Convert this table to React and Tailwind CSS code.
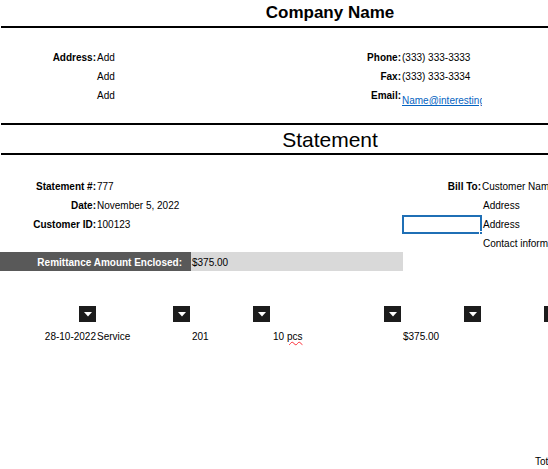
import React from "react"

const font = { fontFamily: '"Liberation Sans", Arial, sans-serif' }

const Dropdown = () => (
  <div className="w-[17px] h-[16px] bg-[#1c1c1c] flex items-center justify-center">
    <svg width="8" height="5" viewBox="0 0 8 5">
      <polygon points="0,0 8,0 4,4.5" fill="#fff" />
    </svg>
  </div>
)

const Rule = () => <div className="h-[2px] bg-black ml-[1px] w-[700px]" />

const App = () => {
  return (
    <div
      className="w-[548px] h-[469px] overflow-hidden bg-white text-black text-[10px] leading-[19px] relative"
      style={font}
    >
      <div className="w-[700px]">
        {/* Company header */}
        <div className="w-[660px] h-[26px] flex items-center justify-center text-[17px] font-bold leading-none pb-[2px]">
          Company Name
        </div>
        <Rule />

        {/* Contact block */}
        <div className="pt-[20px] flex flex-col">
          <div className="flex h-[19px]">
            <div className="w-[97px] text-right font-bold pr-[1px]">Address:</div>
            <div className="w-[94px]">Add</div>
            <div className="w-[211px] text-right font-bold pr-[1px]">Phone:</div>
            <div className="w-[80px] whitespace-nowrap">(333) 333-3333</div>
          </div>
          <div className="flex h-[19px]">
            <div className="w-[97px]" />
            <div className="w-[94px]">Add</div>
            <div className="w-[211px] text-right font-bold pr-[1px]">Fax:</div>
            <div className="w-[80px] whitespace-nowrap">(333) 333-3334</div>
          </div>
          <div className="flex h-[19px] items-start">
            <div className="w-[97px]" />
            <div className="w-[94px]">Add</div>
            <div className="w-[211px] text-right font-bold pr-[1px]">Email:</div>
            <div className="w-[80px] overflow-x-clip whitespace-nowrap pt-[9px] leading-[12px]">
              <a href="#" className="text-[#0563c1] underline">
                Name@interesting.com
              </a>
            </div>
          </div>
        </div>

        {/* Statement title */}
        <div className="mt-[18px]">
          <Rule />
          <div className="w-[660px] h-[28px] flex items-center justify-center text-[21px] leading-none">
            Statement
          </div>
          <Rule />
        </div>

        {/* Statement details */}
        <div className="pt-[22px] flex flex-col">
          <div className="flex h-[19px]">
            <div className="w-[97px] text-right font-bold pr-[1px]">Statement #:</div>
            <div className="w-[94px]">777</div>
            <div className="w-[291px] text-right font-bold pr-[1px]">Bill To:</div>
            <div className="w-[80px] whitespace-nowrap">Customer Name</div>
          </div>
          <div className="flex h-[19px]">
            <div className="w-[97px] text-right font-bold pr-[1px]">Date:</div>
            <div className="w-[94px] whitespace-nowrap">November 5, 2022</div>
            <div className="w-[291px]" />
            <div className="w-[80px] pl-[1px]">Address</div>
          </div>
          <div className="flex h-[19px]">
            <div className="w-[97px] text-right font-bold pr-[1px]">Customer ID:</div>
            <div className="w-[94px]">100123</div>
            <div className="w-[80px]" />
            <div className="w-[131px]" />
            <div className="w-[80px] h-[19px] border-2 border-[#1f6fb5] relative">
              <div className="absolute -right-[3px] -bottom-[3px] w-[4px] h-[4px] bg-[#1f6fb5] border border-white" />
            </div>
            <div className="w-[80px] pl-[1px]">Address</div>
          </div>
          <div className="flex h-[18px]">
            <div className="w-[482px]" />
            <div className="w-[80px] whitespace-nowrap pl-[1px]">Contact information</div>
          </div>
        </div>

        {/* Remittance bar */}
        <div className="flex h-[19px] leading-[21px]">
          <div className="w-[191px] bg-[#595959] text-white font-bold text-right pr-[9px]">
            Remittance Amount Enclosed:
          </div>
          <div className="w-[212px] bg-[#d9d9d9] pl-[1px]">$375.00</div>
        </div>

        {/* Table header dropdowns */}
        <div className="flex mt-[35px] h-[16px]">
          <div className="w-[97px] flex justify-end pr-[1px]"><Dropdown /></div>
          <div className="w-[94px] flex justify-end pr-[1px]"><Dropdown /></div>
          <div className="w-[80px] flex justify-end pr-[1px]"><Dropdown /></div>
          <div className="w-[131px] flex justify-end pr-[1px]"><Dropdown /></div>
          <div className="w-[80px] flex justify-end pr-[1px]"><Dropdown /></div>
          <div className="w-[80px] flex justify-end pr-[1px]"><Dropdown /></div>
        </div>

        {/* Table row */}
        <div className="flex h-[19px] mt-[5px]">
          <div className="w-[97px] text-right pr-[1px]">28-10-2022</div>
          <div className="w-[94px]">Service</div>
          <div className="w-[80px] pl-[1px]">201</div>
          <div className="w-[131px] pl-[2px]">
            10 <span className="underline decoration-wavy decoration-red-500">pcs</span>
          </div>
          <div className="w-[80px] pl-[1px]">$375.00</div>
        </div>

        {/* Total */}
        <div className="flex mt-[106px] h-[19px]">
          <div className="w-[535px]" />
          <div>Total</div>
        </div>
      </div>
    </div>
  )
}

export default App
